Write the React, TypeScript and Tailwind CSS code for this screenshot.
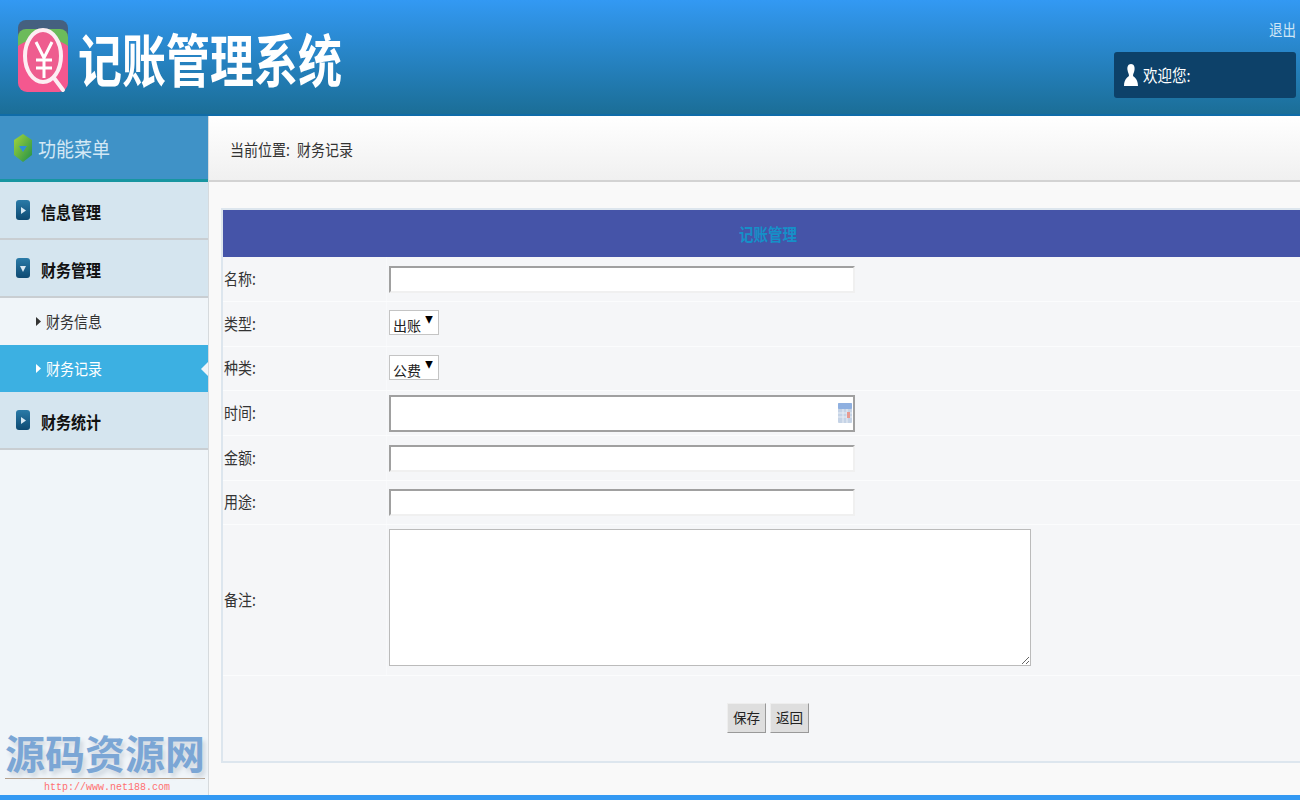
const font = '[font-family:"Noto_Sans_CJK_SC","Liberation_Sans",sans-serif]'

function LogoIcon() {
  return (
    <svg width="52" height="74" viewBox="0 0 52 74" className="shrink-0">
      <rect x="1" y="0" width="50" height="40" rx="8" fill="#45607f" />
      <rect x="1" y="9" width="50" height="40" rx="8" fill="#6cbb5a" />
      <path d="M1 26 C14 16 38 16 51 26 V63 A9 9 0 0 1 42 72 H10 A9 9 0 0 1 1 63 Z" fill="#f4588f" />
      <ellipse cx="26" cy="36" rx="18" ry="26" fill="#ee5d8f" stroke="#fdeef3" strokeWidth="4" />
      <path d="M37 58 L46 70" stroke="#fdeef3" strokeWidth="4" strokeLinecap="round" />
      <path d="M19 22 L27 38 L35 22 M27 38 V58 M19 40 H35 M19 48 H35" stroke="#fff" strokeWidth="3" fill="none" />
    </svg>
  )
}

function Gem() {
  return (
    <svg width="18" height="28" viewBox="0 0 18 28" className="shrink-0">
      <defs>
        <linearGradient id="gem" x1="0" y1="0" x2="1" y2="1">
          <stop offset="0" stopColor="#a5d63a" />
          <stop offset="1" stopColor="#1f8f4a" />
        </linearGradient>
      </defs>
      <path d="M9 0 L18 6 V21 L9 28 L0 21 V6 Z" fill="url(#gem)" />
      <path d="M5 12 H13 L9 18 Z" fill="#2f8fd8" />
    </svg>
  )
}

function NavIcon({ down }: { down?: boolean }) {
  return (
    <span className="w-[14px] h-[20px] rounded-[3px] bg-gradient-to-b from-[#2a7ba8] to-[#0e4a72] flex items-center justify-center shrink-0">
      <svg width="6" height="7" viewBox="0 0 6 7">
        <path d={down ? 'M0 1 H6 L3 7 Z' : 'M1 0 V7 L6 3.5 Z'} fill="#d8e8f2" />
      </svg>
    </span>
  )
}

function NavItem({ label, down }: { label: string; down?: boolean }) {
  return (
    <div className="h-[58px] bg-[#d5e5ef] border-b-2 border-[#c9ced2] flex items-center pl-[16px] gap-[11px]">
      <NavIcon down={down} />
      <span className="text-[15px] font-bold text-[#111] scale-y-[1.15] translate-y-[2px]">{label}</span>
    </div>
  )
}

function SubItem({ label, active }: { label: string; active?: boolean }) {
  return (
    <div className={`relative h-[47px] flex items-center pl-[36px] gap-[5px] ${active ? 'bg-[#3cb0e2] text-white' : 'text-[#333]'}`}>
      <svg width="5" height="9" viewBox="0 0 5 9">
        <path d="M0 0 L5 4.5 L0 9 Z" fill={active ? '#fff' : '#333'} />
      </svg>
      <span className="text-[14px] scale-y-[1.15]">{label}</span>
      {active && (
        <span className="absolute right-0 top-[17px] w-0 h-0 border-y-[7px] border-y-transparent border-r-[7px] border-r-[#f0f5f9]" />
      )}
    </div>
  )
}

function Row({ label, h, children }: { label: string; h: string; children: React.ReactNode }) {
  return (
    <div className={`flex items-center border-b border-[#fbfcfd] ${h}`}>
      <div className="w-[164px] h-full flex items-center pl-[1px] border-r border-[#f8f9fb] text-[14px] text-[#333] shrink-0">
        <span className="scale-y-[1.15] origin-left -translate-y-[1px]">{label}</span>
      </div>
      <div className="pl-[2px]">{children}</div>
    </div>
  )
}

function TextInput() {
  return (
    <input
      type="text"
      className="block w-[466px] h-[27px] bg-white border-2 border-[#f0f0f0] border-t-[#a0a0a0] border-l-[#a0a0a0] outline-none"
    />
  )
}

function Select({ value }: { value: string }) {
  return (
    <div className="relative w-[50px] h-[25px] mb-[3px]">
      <select className="appearance-none w-full h-full bg-white border border-[#c4c4c4] pl-[3px] pt-[4px] text-[14px] text-[#222] rounded-none outline-none">
        <option>{value}</option>
      </select>
      <span className="absolute right-[6px] top-[3px] text-[8px] text-black pointer-events-none scale-y-[1.2]">▼</span>
    </div>
  )
}

export default function App() {
  return (
    <div className={`${font} w-[1300px] h-[800px] overflow-hidden flex flex-col bg-[#f9f9f9]`}>
      {/* Header */}
      <header className="h-[116px] shrink-0 bg-gradient-to-b from-[#3399f3] to-[#1b6e97] border-b-2 border-[#0f6ca8] flex justify-between">
        <div className="flex items-center pl-[17px] gap-[9px]">
          <LogoIcon />
          <span className="text-[44px] leading-none font-bold text-white scale-y-[1.3] origin-center whitespace-nowrap">
            记账管理系统
          </span>
        </div>
        <div className="w-[186px] pr-[4px] flex flex-col items-end pt-[19px]">
          <span className="text-[13.5px] leading-[20px] text-[#cfe6f6] scale-y-[1.15]">退出</span>
          <div className="mt-[13px] w-[182px] h-[46px] rounded-[3px] bg-[#0d4169] flex items-center pl-[10px] gap-[5px] text-white">
            <svg width="14" height="22" viewBox="0 0 14 22">
              <path d="M7 0 C10 0 11 3 10.5 6 C10 9 9 10 9 11.5 C9 13 14 14 14 22 H0 C0 14 5 13 5 11.5 C5 10 4 9 3.5 6 C3 3 4 0 7 0 Z" fill="#fff" />
            </svg>
            <span className="text-[14.5px] scale-y-[1.15]">欢迎您:</span>
          </div>
        </div>
      </header>

      <div className="flex-1 flex min-h-0">
        {/* Sidebar */}
        <aside className="relative w-[209px] shrink-0 bg-[#f0f5f9] border-r border-[#d6dadd]">
          <div className="h-[66px] bg-[#3f92c7] border-b-[3px] border-[#1795a0] flex items-center pl-[14px] gap-[6px]">
            <Gem />
            <span className="text-[18px] text-[#d3e8f5] scale-y-[1.15] translate-y-[1px]">功能菜单</span>
          </div>
          <NavItem label="信息管理" />
          <NavItem label="财务管理" down />
          <SubItem label="财务信息" />
          <SubItem label="财务记录" active />
          <NavItem label="财务统计" />

          {/* Watermark */}
          <div className="absolute left-[5px] top-[611px] w-[200px]">
            <div className="text-[40px] leading-[51px] font-bold text-[#7ba6d5] whitespace-nowrap [text-shadow:3px_4px_4px_#cfd7df]">
              源码资源网
            </div>
            <div className="border-t border-[#b39f8c] pl-[39px] text-[10px] leading-[17px] text-[#ff7070] [font-family:'Liberation_Mono',monospace]">
              http://www.net188.com
            </div>
          </div>
        </aside>

        {/* Main */}
        <main className="flex-1 min-w-0 overflow-hidden">
          <div className="h-[66px] bg-gradient-to-b from-white to-[#f0f0f0] border-b-2 border-[#d3d3d3] flex items-center pl-[21px] pt-[3px] gap-[7px] text-[14px] text-[#333]">
            <span className="scale-y-[1.15]">当前位置:</span>
            <span className="scale-y-[1.15]">财务记录</span>
          </div>
          <div className="ml-[12px] mt-[26px] w-[1094px] bg-[#f5f6f8] border-2 border-[#dde6ee]">
            <div className="h-[47px] bg-[#4554a8] flex items-center justify-center text-[14.5px] font-bold text-[#1590c8]">
              <span className="scale-y-[1.15]">记账管理</span>
            </div>
            <Row label="名称:" h="h-[45px]"><TextInput /></Row>
            <Row label="类型:" h="h-[45px]"><Select value="出账" /></Row>
            <Row label="种类:" h="h-[44px]"><Select value="公费" /></Row>
            <Row label="时间:" h="h-[45px]">
              <div className="relative w-[466px] h-[37px]">
                <input type="text" className="block w-full h-full bg-white border-2 border-[#a0a0a0] outline-none" />
                <svg width="14" height="20" viewBox="0 0 14 20" className="absolute right-[3px] top-[8px]">
                  <rect width="14" height="20" rx="1" fill="#c5d3e6" />
                  <rect width="14" height="6" rx="1" fill="#8fb0e0" />
                  <path d="M0 10 H14 M0 14 H14 M5 6 V20 M9 6 V20" stroke="#e8edf4" strokeWidth="1" />
                  <rect x="9" y="9" width="3" height="6" fill="#e89a90" />
                </svg>
              </div>
            </Row>
            <Row label="金额:" h="h-[45px]"><TextInput /></Row>
            <Row label="用途:" h="h-[44px]"><TextInput /></Row>
            <Row label="备注:" h="h-[151px]">
              <textarea className="block w-[642px] h-[137px] mb-[6px] bg-white border border-[#bbbbbb] outline-none" />
            </Row>
            <div className="h-[85px] flex items-center pl-[504px] pb-[2px] gap-[4px]">
              <button className="w-[39px] h-[30px] bg-[#dedede] border border-[#eeeeee] border-r-[#999] border-b-[#999] text-[13.5px] text-[#222]">保存</button>
              <button className="w-[39px] h-[30px] bg-[#dedede] border border-[#eeeeee] border-r-[#999] border-b-[#999] text-[13.5px] text-[#222]">返回</button>
            </div>
          </div>
        </main>
      </div>

      <footer className="h-[5px] shrink-0 bg-[#3399f3]" />
    </div>
  )
}
